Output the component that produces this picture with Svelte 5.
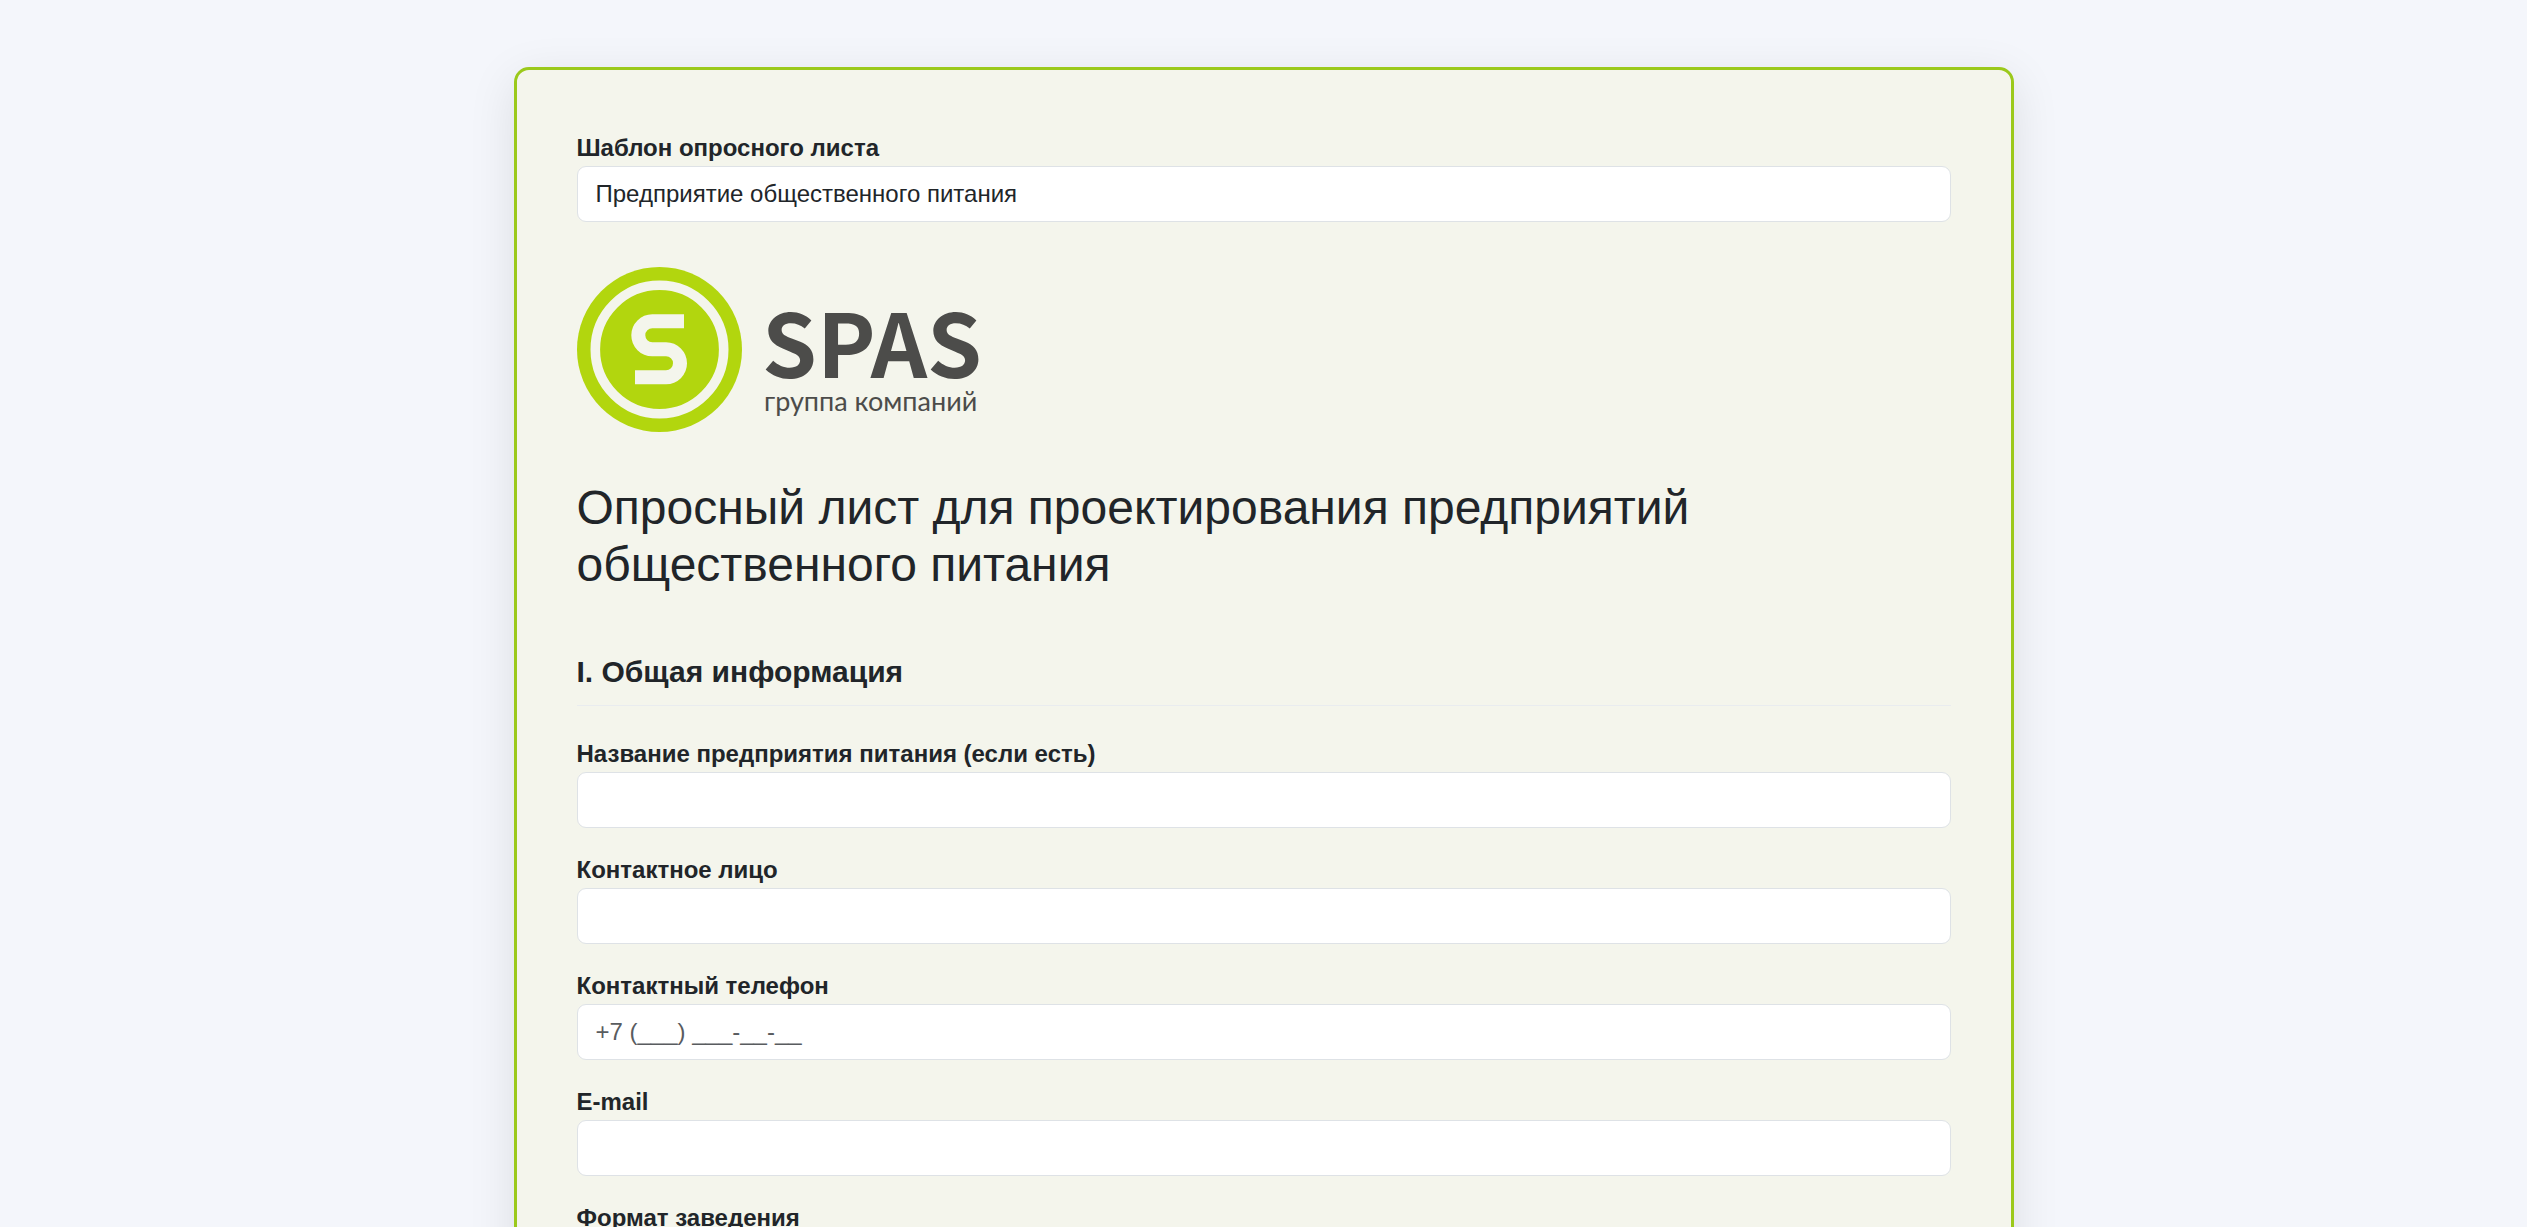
<script lang="ts">
  interface Field {
    id: string;
    label: string;
    type: string;
    placeholder?: string;
  }

  const templates = ['Предприятие общественного питания'];

  const fields: Field[] = [
    { id: 'company', label: 'Название предприятия питания (если есть)', type: 'text' },
    { id: 'contact', label: 'Контактное лицо', type: 'text' },
    { id: 'phone', label: 'Контактный телефон', type: 'tel', placeholder: '+7 (___) ___-__-__' },
    { id: 'email', label: 'E-mail', type: 'email' },
    { id: 'format', label: 'Формат заведения', type: 'text' }
  ];

  let template = $state(templates[0]);
</script>

<main class="survey">
  <div class="field template">
    <label for="template">Шаблон опросного листа</label>
    <select id="template" class="control" bind:value={template}>
      {#each templates as name (name)}
        <option value={name}>{name}</option>
      {/each}
    </select>
  </div>

  <svg class="logo" viewBox="0 0 400 165" role="img" aria-label="SPAS группа компаний">
    <circle class="mark" cx="82.5" cy="82.5" r="82.5" />
    <circle class="ring" cx="82.5" cy="82.5" r="64.2" />
    <path class="sign" d="M107 54.3H75.3a14 14 0 0 0 0 28H89a14 14 0 0 1 0 28H58" />
    <text class="brand" x="185" y="111">SPAS</text>
    <text class="tagline" x="187" y="144">группа компаний</text>
  </svg>

  <h1>Опросный лист для проектирования предприятий общественного питания</h1>

  <form>
    <h2>I. Общая информация</h2>
    {#each fields as { id, label, type, placeholder } (id)}
      <div class="field">
        <label for={id}>{label}</label>
        <input {id} class="control" {type} {placeholder} />
      </div>
    {/each}
  </form>
</main>

<style>
  :global(body) {
    background: #f4f6fb;
  }

  .survey {
    box-sizing: border-box;
    max-width: 1500px;
    margin: 67px auto;
    padding: 60px;
    font-family: 'Liberation Sans', Arial, sans-serif;
    font-size: 24px;
    line-height: 36px;
    color: #212529;
    background: #f4f5ec;
    border: 3px solid #9bc91b;
    border-radius: 15px;
    box-shadow: 0 12px 48px rgba(0, 0, 0, 0.1);
  }

  .field {
    display: flex;
    flex-direction: column;
    margin-bottom: 24px;
  }

  .template {
    margin-bottom: 45px;
  }

  label {
    font-weight: 700;
  }

  .control {
    appearance: none;
    box-sizing: border-box;
    width: 100%;
    height: 56px;
    margin: 0;
    padding: 9px 18px;
    font: inherit;
    color: inherit;
    background: #fff;
    border: 1px solid #dee2e6;
    border-radius: 9px;
  }

  .control::placeholder {
    color: #595c5f;
    opacity: 1;
  }

  .control:focus {
    border-color: #9bc91b;
    outline: none;
  }

  .logo {
    display: block;
    width: 400px;
    max-width: 100%;
    overflow: visible;
  }

  .mark {
    fill: #b2d60e;
  }

  .ring {
    fill: none;
    stroke: #f4f5ec;
    stroke-width: 9.6;
  }

  .sign {
    fill: none;
    stroke: #f4f5ec;
    stroke-width: 14;
  }

  .brand {
    font-family: 'Noto Sans CJK SC', sans-serif;
    font-size: 88px;
    font-weight: 700;
    fill: #4c4c4a;
  }

  .tagline {
    font-family: Lato, sans-serif;
    font-size: 27px;
    fill: #4c4c4a;
  }

  h1 {
    margin: 47px 0 60px;
    font-size: 48px;
    font-weight: 400;
    line-height: 57px;
  }

  h2 {
    margin: 0 0 30px;
    padding: 1px 0 15px;
    font-size: 30px;
    font-weight: 700;
    border-bottom: 1px solid #e9ecef;
  }
</style>
